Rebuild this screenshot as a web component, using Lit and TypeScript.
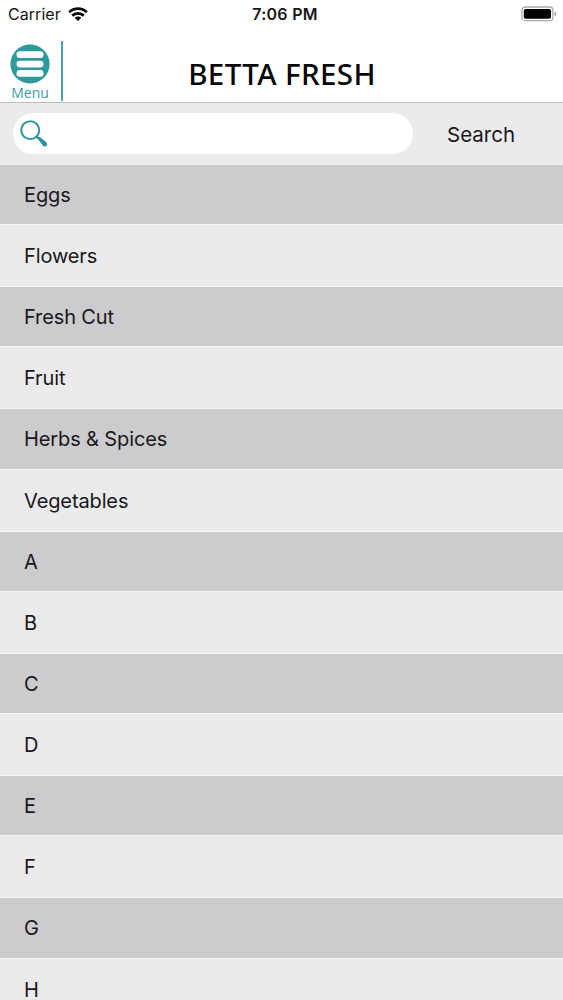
import { LitElement, html, css, svg } from "lit";
import { customElement, property } from "lit/decorators.js";

const CATEGORIES = [
  "Eggs", "Flowers", "Fresh Cut", "Fruit", "Herbs & Spices", "Vegetables",
  "A", "B", "C", "D", "E", "F", "G", "H",
];

@customElement("status-bar")
export class StatusBar extends LitElement {
  static styles = css`
    :host {
      display: grid;
      grid-template-columns: 1fr auto 1fr;
      align-items: center;
      height: 28px;
      padding: 0 6px 0 8px;
      box-sizing: border-box;
      color: #161616;
      font: 400 16px/28px Inter, sans-serif;
    }
    .carrier { display: flex; align-items: center; gap: 7px; letter-spacing: 0.05px; }
    .wifi { display: block; margin-top: -1px; }
    .time { font-weight: 600; font-size: 16px; letter-spacing: 0.25px; padding-left: 5px; }
    .battery { display: block; justify-self: end; }
  `;

  render() {
    return html`
      <div class="carrier">
        <span>Carrier</span>
        <svg class="wifi" width="20" height="14" viewBox="0 0 20 14">
          <g fill="none" stroke="#0b0b0b" stroke-width="2.8">
            <path d="M1.2 5.2C6.1 .5 13.9 .5 18.8 5.2" />
            <path d="M4.2 8.6C7.5 5.6 12.5 5.6 15.8 8.6" />
          </g>
          <path d="M6.6 10.8C8.6 9.1 11.4 9.1 13.4 10.8L10 14Z" fill="#0b0b0b" />
        </svg>
      </div>
      <div class="time">7:06 PM</div>
      <svg class="battery" width="36" height="16" viewBox="0 0 36 16">
        <rect x=".9" y="1" width="31" height="13.6" rx="3.2" fill="none" stroke="#aaa" stroke-width="1.3" />
        <rect x="2.8" y="2.9" width="27.2" height="9.8" rx="1.8" fill="#000" />
        <path d="M33.6 5.4Q35.3 6 35.3 7.8Q35.3 9.6 33.6 10.2Z" fill="#999" />
      </svg>
    `;
  }
}

@customElement("title-bar")
export class TitleBar extends LitElement {
  @property() heading = "";

  static styles = css`
    :host {
      display: grid;
      grid-template-columns: 63px 1fr 62px;
      height: 75px;
      box-sizing: border-box;
      border-bottom: 1px solid #bdbbbd;
    }
    .menu {
      display: flex;
      flex-direction: column;
      align-items: center;
      box-sizing: border-box;
      height: 60px;
      margin-top: 13px;
      padding: 3px 1px 0 0;
      border-right: 2px solid #47a3a5;
      color: #3c9ea1;
      font: 400 14px/18px "Open Sans", sans-serif;
    }
    .glyph { display: block; flex: none; }
    .label { height: 18px; }
    .heading {
      margin: 0;
      padding-top: 26px;
      text-align: center;
      color: #050505;
      font: 500 29.5px/40px "Noto Sans", sans-serif;
      letter-spacing: 0.4px;
      white-space: nowrap;
    }
  `;

  render() {
    return html`
      <div class="menu">
        <svg class="glyph" width="40" height="40" viewBox="0 0 40 40">
          <circle cx="20" cy="20" r="19.6" fill="#2f999c" />
          ${[7.3, 16.7, 26.1].map(
            (y) => svg`<rect x="6.5" y=${y} width="27" height="6.7" rx="3.3" fill="#fff" />`,
          )}
        </svg>
        <span class="label">Menu</span>
      </div>
      <h1 class="heading">${this.heading}</h1>
    `;
  }
}

@customElement("search-bar")
export class SearchBar extends LitElement {
  static styles = css`
    :host {
      display: flex;
      align-items: center;
      box-sizing: border-box;
      height: 62px;
      padding: 0 0 1px 13px;
      background: #ebeaec;
      border-bottom: 1px solid #efeef0;
    }
    .field {
      display: flex;
      align-items: center;
      box-sizing: border-box;
      width: 400px;
      height: 41px;
      padding-left: 6px;
      border-radius: 21px;
      background: #fff;
    }
    .action {
      padding: 4px 0 0 34px;
      color: #19181a;
      font: 400 20.5px/28px Inter, sans-serif;
    }
  `;

  render() {
    return html`
      <div class="field">
        <svg width="30" height="30" viewBox="0 0 30 30">
          <circle cx="11.2" cy="12.2" r="9" fill="none" stroke="#3599a0" stroke-width="2.1" />
          <path d="M17.3 18.4L20.5 21.2" stroke="#2c929b" stroke-width="2.4" />
          <path d="M18.6 20.6L20.8 18.9L27.6 24.4Q29.2 26.2 27.6 27.8Q26 29.4 24.2 27.9Z" fill="#2c929b" />
        </svg>
      </div>
      <span class="action">Search</span>
    `;
  }
}

@customElement("app-root")
export class AppRoot extends LitElement {
  static styles = css`
    :host {
      display: flex;
      flex-direction: column;
      height: 1000px;
      overflow: hidden;
      background: #fff;
    }
    status-bar, title-bar, search-bar { flex: none; }
    .list { margin: 0; padding: 0; list-style: none; }
    .row {
      box-sizing: border-box;
      padding-left: 24px;
      border-bottom: 1px solid #f5f4f6;
      color: #19181a;
      font: 400 20px/60px Inter, sans-serif;
      letter-spacing: -0.12px;
    }
    .row:nth-child(odd) { background: #cccbcd; height: 60.1px; line-height: 60px; }
    .row:nth-child(even) { background: #ebeaec; height: 62.15px; line-height: 62px; }
  `;

  render() {
    return html`
      <status-bar></status-bar>
      <title-bar heading="BETTA FRESH"></title-bar>
      <search-bar></search-bar>
      <ul class="list">
        ${CATEGORIES.map((name) => html`<li class="row">${name}</li>`)}
      </ul>
    `;
  }
}
